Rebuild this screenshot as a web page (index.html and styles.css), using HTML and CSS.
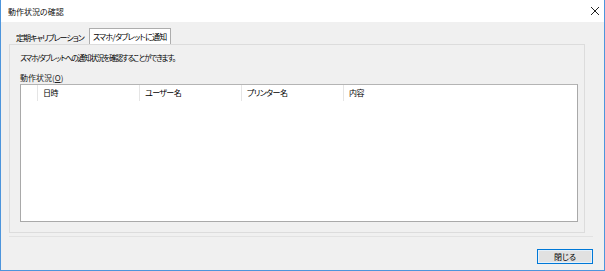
FILE: index.html
```html
<!DOCTYPE html>
<html lang="ja">
<head>
  <meta charset="UTF-8">
  <title>動作状況の確認</title>
  <link rel="stylesheet" href="styles.css">
</head>
<body>
  <div class="window">
    <!-- Title bar -->
    <div class="titlebar">
      <span class="title">動作状況の確認</span>
      <svg class="close" width="10" height="10" viewBox="0 0 10 10">
        <path d="M1 1 L9 9 M9 1 L1 9" stroke="#222" stroke-width="1"/>
      </svg>
    </div>

    <div class="client">
      <!-- Tabs -->
      <div class="tabs">
        <div class="tab">定期キャリブレーション</div>
        <div class="tab active">スマホ/タブレットに通知</div>
      </div>

      <div class="tabpage">
        <p class="desc">スマホ/タブレットへの通知状況を確認することができます。</p>
        <div class="label">動作状況(<u>O</u>)</div>

        <div class="listview">
          <div class="lv-header">
            <div class="col col-icon"></div>
            <div class="col col-date">日時</div>
            <div class="col col-user">ユーザー名</div>
            <div class="col col-printer">プリンター名</div>
            <div class="col col-content">内容</div>
          </div>
        </div>
      </div>

      <div class="footer">
        <button class="btn-close">閉じる</button>
      </div>
    </div>
  </div>
</body>
</html>
```

FILE: styles.css
```css
* {
  box-sizing: border-box;
  margin: 0;
  padding: 0;
}

body {
  font-family: "Noto Sans CJK JP", "Noto Sans", sans-serif;
  font-feature-settings: "palt";
  font-size: 8px;
  color: #000;
  background: #fff;
}

/* Window frame */
.window {
  width: 605px;
  height: 271px;
  border: 1px solid #4d95dc;
  border-top: none;
  display: flex;
  flex-direction: column;
}

.titlebar {
  height: 22px;
  background: #fff;
  display: flex;
  align-items: center;
  justify-content: space-between;
  padding: 0 4px 0 7px;
}

.title {
  font-size: 8px;
  color: #111;
}

.close {
  display: block;
}

/* Client area */
.client {
  flex: 1;
  background: #f0f0f0;
  display: flex;
  flex-direction: column;
  padding: 6px 19px 0 8px;
}

.tabs {
  display: flex;
  align-items: flex-end;
  height: 16px;
  padding-left: 2px;
}

.tab {
  height: 14px;
  line-height: 13px;
  padding: 0 4px;
  border: 1px solid transparent;
  border-bottom: none;
  letter-spacing: -1px;
  color: #000;
}

.tab.active {
  height: 16px;
  line-height: 15px;
  background: #fff;
  border-color: #adadad;
  padding: 0 3px;
  letter-spacing: -0.7px;
}

.tabpage {
  height: 189px;
  border: 1px solid #dcdcdc;
  padding: 8px 6px 0 10px;
}

.desc {
  line-height: 10px;
  font-size: 7.5px;
  letter-spacing: -1.1px;
}

.label {
  margin-top: 10px;
  line-height: 10px;
  color: #222;
}

.listview {
  margin-top: 1px;
  height: 138px;
  background: #fff;
  border: 1px solid #a9a9a9;
  border-top-color: #b4b4b4;
}

.lv-header {
  display: flex;
  height: 16px;
}

.col {
  line-height: 16px;
  padding-left: 5px;
  border-right: 1px solid #e5e5e5;
  white-space: nowrap;
  letter-spacing: -0.6px;
}

.col-icon { width: 17px; }
.col-date { width: 102px; }
.col-user { width: 102px; }
.col-printer { width: 102px; }
.col-content { width: 100px; border-right-color: transparent; }

/* Footer with button */
.footer {
  border-top: 1px solid #e2e2e2;
  margin-top: 3px;
  display: flex;
  justify-content: flex-end;
  padding-top: 12px;
  margin-right: -8px;
}

.btn-close {
  width: 56px;
  height: 15px;
  font-family: inherit;
  font-feature-settings: "palt";
  font-size: 8px;
  background: #e1e1e1;
  border: 1px solid #0078d7;
  box-shadow: inset 0 0 0 1px #e5f1fb;
  color: #000;
}
```
